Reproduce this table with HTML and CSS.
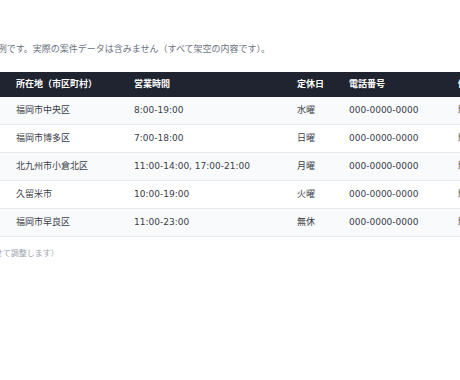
FILE: index.html
```html
<!DOCTYPE html>
<html lang="ja">
<head>
<meta charset="utf-8">
<title>店舗一覧</title>
<link rel="stylesheet" href="styles.css">
</head>
<body>
<div class="page">
  <p class="note">この表はサンプルの表示例です。実際の案件データは含みません（すべて架空の内容です）。</p>
  <table class="shops">
    <colgroup>
      <col class="c-name">
      <col class="c-area">
      <col class="c-hours">
      <col class="c-off">
      <col class="c-tel">
      <col class="c-memo">
    </colgroup>
    <thead>
      <tr>
        <th>店舗名</th>
        <th>所在地（市区町村）</th>
        <th>営業時間</th>
        <th>定休日</th>
        <th>電話番号</th>
        <th>備考</th>
      </tr>
    </thead>
    <tbody>
      <tr><td>サンプル店A</td><td>福岡市中央区</td><td>8:00-19:00</td><td>水曜</td><td>000-0000-0000</td><td>駐車場あり</td></tr>
      <tr><td>サンプル店B</td><td>福岡市博多区</td><td>7:00-18:00</td><td>日曜</td><td>000-0000-0000</td><td>駐車場なし</td></tr>
      <tr><td>サンプル店C</td><td>北九州市小倉北区</td><td>11:00-14:00, 17:00-21:00</td><td>月曜</td><td>000-0000-0000</td><td>駐車場あり</td></tr>
      <tr><td>サンプル店D</td><td>久留米市</td><td>10:00-19:00</td><td>火曜</td><td>000-0000-0000</td><td>駐車場あり</td></tr>
      <tr><td>サンプル店E</td><td>福岡市早良区</td><td>11:00-23:00</td><td>無休</td><td>000-0000-0000</td><td>駐車場なし</td></tr>
    </tbody>
  </table>
  <p class="foot">（列幅は画面サイズに合わせて調整します）</p>
</div>
</body>
</html>
```

FILE: styles.css
```css
html, body {
  margin: 0;
  padding: 0;
  background: #ffffff;
  overflow: hidden;
}

body {
  font-family: "DejaVu Sans", "Noto Sans CJK JP", sans-serif;
  font-size: 9px;
  color: #333a44;
}

.page {
  margin-left: -101px;
  width: 760px;
  padding-top: 42px;
}

.note {
  margin: 0 0 16px;
  line-height: 14px;
  color: #6b7280;
  white-space: nowrap;
}

.shops {
  border-collapse: collapse;
  table-layout: fixed;
  width: 760px;
}

.c-name { width: 105px; }
.c-area { width: 118px; }
.c-hours { width: 163px; }
.c-off { width: 52px; }
.c-tel { width: 109px; }
.c-memo { width: 213px; }

.shops th {
  background: #1f2430;
  color: #ffffff;
  font-weight: bold;
  text-align: left;
  padding: 6px 12px;
  line-height: 13px;
  white-space: nowrap;
}

.shops td {
  padding: 7px 12px;
  line-height: 13px;
  border-bottom: 1px solid #e8ebef;
  white-space: nowrap;
  color: #3a404a;
}

.shops tbody tr:nth-child(odd) td {
  background: #f9fafb;
}

.foot {
  margin: 11px 0 0;
  line-height: 12px;
  font-size: 8px;
  color: #9ca3af;
  white-space: nowrap;
}
```
